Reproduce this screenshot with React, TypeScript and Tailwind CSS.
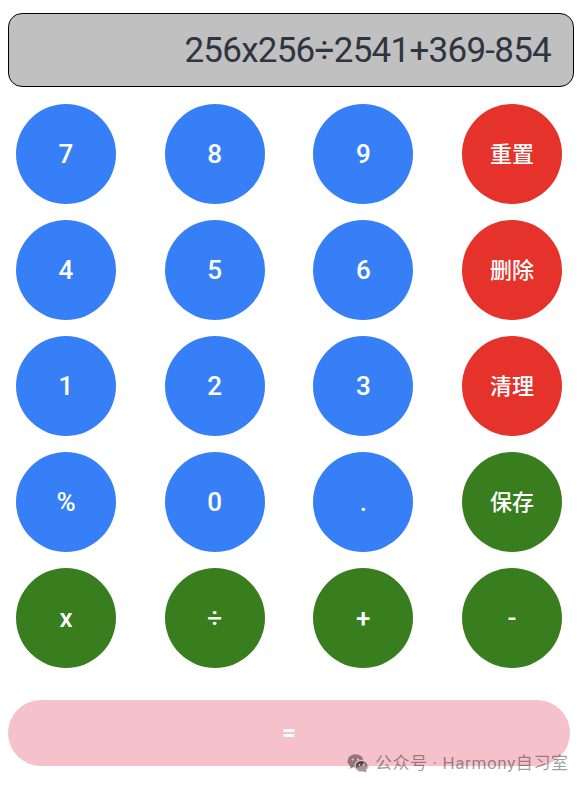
const rows: { label: string; color: string }[][] = [
  [
    { label: "7", color: "blue" },
    { label: "8", color: "blue" },
    { label: "9", color: "blue" },
    { label: "重置", color: "red" },
  ],
  [
    { label: "4", color: "blue" },
    { label: "5", color: "blue" },
    { label: "6", color: "blue" },
    { label: "删除", color: "red" },
  ],
  [
    { label: "1", color: "blue" },
    { label: "2", color: "blue" },
    { label: "3", color: "blue" },
    { label: "清理", color: "red" },
  ],
  [
    { label: "%", color: "blue" },
    { label: "0", color: "blue" },
    { label: ".", color: "blue" },
    { label: "保存", color: "green" },
  ],
  [
    { label: "x", color: "green" },
    { label: "÷", color: "green" },
    { label: "+", color: "green" },
    { label: "-", color: "green" },
  ],
];

const bg: Record<string, string> = {
  blue: "bg-[#377ff6]",
  red: "bg-[#e5322a]",
  green: "bg-[#387e1f]",
};

function WeChatIcon() {
  return (
    <svg width="22" height="20" viewBox="0 0 22 20" className="shrink-0">
      <ellipse cx="8.5" cy="8" rx="8" ry="6.8" fill="currentColor" />
      <path d="M3.5 12.5 L2.8 16 L6.5 13.8 Z" fill="currentColor" />
      <circle cx="5.8" cy="6.5" r="1.1" fill="#f5c2cc" />
      <circle cx="11" cy="6.5" r="1.1" fill="#f5c2cc" />
      <ellipse cx="14.6" cy="13" rx="6.6" ry="5.6" fill="currentColor" stroke="#f5c2cc" strokeWidth="1.2" />
      <path d="M18.5 17 L19.5 19.5 L16 18 Z" fill="currentColor" />
      <circle cx="12.4" cy="12" r="0.9" fill="#f5c2cc" />
      <circle cx="16.8" cy="12" r="0.9" fill="#f5c2cc" />
    </svg>
  );
}

export default function App() {
  return (
    <div
      className="relative h-[786px] w-[582px] overflow-hidden bg-white"
      style={{ fontFamily: 'Roboto, "Noto Sans CJK SC", sans-serif' }}
    >
      {/* 显示区 */}
      <div className="ml-[8px] mt-[13px] flex h-[74px] w-[566px] items-center justify-end rounded-[14px] border-[1.5px] border-black bg-[#c0c0c0] pr-[22px]">
        <span className="text-[35px] leading-none tracking-[-0.75px] text-[#2f3441]">
          256x256÷2541+369-854
        </span>
      </div>

      {/* 按键 */}
      <div className="ml-[16px] mt-[17px] flex w-[546px] flex-col gap-[16px]">
        {rows.map((row, i) => (
          <div key={i} className="flex justify-between">
            {row.map((b) => (
              <div
                key={b.label}
                className={`flex h-[100px] w-[100px] items-center justify-center rounded-full font-medium text-white ${bg[b.color]} ${
                  b.label.length > 1 ? "text-[22px]" : "text-[26px]"
                }`}
              >
                {b.label}
              </div>
            ))}
          </div>
        ))}
      </div>

      <div className="ml-[8px] mt-[32px] flex h-[66px] w-[562px] items-center justify-center rounded-full bg-[#f5c2cc] text-[24px] font-bold text-white">
        =
      </div>

      <div className="absolute left-[347px] top-[753px] flex items-center gap-[6px] text-[17px] leading-none text-black/40">
        <WeChatIcon />
        <span className="tracking-[0.6px]">公众号 · Harmony自习室</span>
      </div>
    </div>
  );
}
